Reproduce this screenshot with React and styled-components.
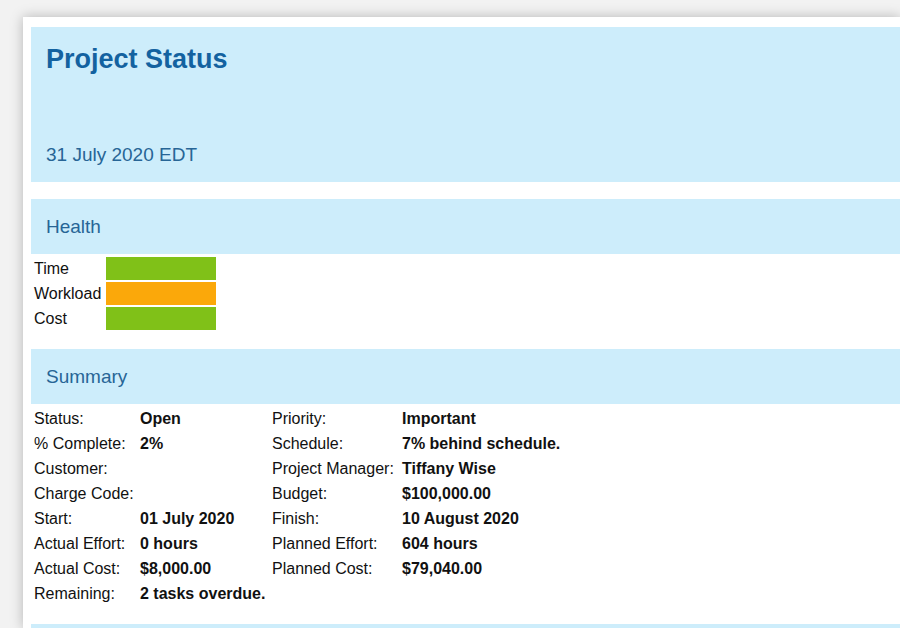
import React from 'react';
import styled, { createGlobalStyle } from 'styled-components';

const Global = createGlobalStyle`
  html, body { margin: 0; background: #f2f2f2; overflow: hidden; }
  body { font-family: "Liberation Sans", Arial, sans-serif; }
`;

const Card = styled.div`
  margin: 17px 0 0 23px;
  width: 877px;
  height: 611px;
  overflow: hidden;
  background: #fff;
  box-shadow: 0 0 12px rgba(0,0,0,0.25);
  padding: 10px 0 0 8px;
  box-sizing: border-box;
`;

const Banner = styled.div`
  background: #cdedfb;
  color: #1b66a3;
  padding: ${p => p.big ? '16px 15px 16px' : '0 15px'};
  height: ${p => p.big ? '155px' : '55px'};
  box-sizing: border-box;
  display: flex;
  flex-direction: column;
  justify-content: ${p => p.big ? 'space-between' : 'center'};
  margin-bottom: ${p => p.gap || 0}px;
`;

const Title = styled.h1`
  margin: 0;
  font-size: 27px;
  font-weight: bold;
  color: #1362a0;
  line-height: 32px;
`;

const Sub = styled.div`
  font-size: 19px;
  color: #276596;
`;

const Section = styled.div`
  font-size: 19px;
  color: #276596;
`;

const Table = styled.table`
  border-collapse: collapse;
  font-size: 16px;
  color: #111;
  margin: 2px 0 0 3px;
  td { padding: 0; height: 25px; vertical-align: middle; white-space: nowrap; }
`;

const Label = styled.td`
  width: ${p => p.w || 'auto'};
`;

const Value = styled.td`
  font-weight: bold;
  width: ${p => p.w || 'auto'};
`;

const Bar = styled.div`
  width: 110px;
  height: 23px;
  background: ${p => p.c};
  margin-left: 3px;
`;

const Spacer = styled.div`height: ${p => p.h}px;`;

const health = [['Time', '#80c118'], ['Workload', '#fba80a'], ['Cost', '#80c118']];

const rows = [
  ['Status:', 'Open', 'Priority:', 'Important'],
  ['% Complete:', '2%', 'Schedule:', '7% behind schedule.'],
  ['Customer:', '', 'Project Manager:', 'Tiffany Wise'],
  ['Charge Code:', '', 'Budget:', '$100,000.00'],
  ['Start:', '01 July 2020', 'Finish:', '10 August 2020'],
  ['Actual Effort:', '0 hours', 'Planned Effort:', '604 hours'],
  ['Actual Cost:', '$8,000.00', 'Planned Cost:', '$79,040.00'],
  ['Remaining:', '2 tasks overdue.', '', ''],
];

export default function App() {
  return (
    <>
      <Global />
      <Card>
        <Banner big gap={17}>
          <Title>Project Status</Title>
          <Sub>31 July 2020 EDT</Sub>
        </Banner>
        <Banner><Section>Health</Section></Banner>
        <Table>
          <tbody>
            {health.map(([l, c]) => (
              <tr key={l}><Label w="69px">{l}</Label><td><Bar c={c} /></td></tr>
            ))}
          </tbody>
        </Table>
        <Spacer h={18} />
        <Banner><Section>Summary</Section></Banner>
        <Table>
          <tbody>
            {rows.map((r, i) => (
              <tr key={i}>
                <Label w="106px">{r[0]}</Label>
                {i === 7
                  ? <Value colSpan={3}>{r[1]}</Value>
                  : <>
                      <Value w="132px">{r[1]}</Value>
                      <Label w="130px">{r[2]}</Label>
                      <Value>{r[3]}</Value>
                    </>}
              </tr>
            ))}
          </tbody>
        </Table>
        <Spacer h={18} />
        <Banner />
      </Card>
    </>
  );
}
